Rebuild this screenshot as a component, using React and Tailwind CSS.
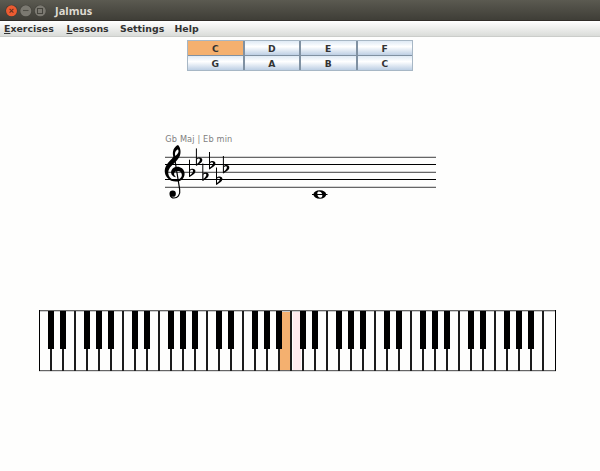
import React from "react";

const BUTTONS = ["C", "D", "E", "F", "G", "A", "B", "C"];
const MENU = [
  { label: "Exercises", mnemonic: true, style: "w-[62.5px]" },
  { label: "Lessons", mnemonic: true, style: "w-[53.5px]" },
  { label: "Settings", mnemonic: false, style: "w-[54.5px]" },
  { label: "Help", mnemonic: false, style: "w-[40px]" },
];
const WHITE_KEYS = Array.from({ length: 43 }, (_, i) => i);
const FLATS = [
  [189.5, 171.7],
  [196.4, 160.4],
  [202.8, 175.5],
  [209.5, 164],
  [216.5, 179.5],
  [223.4, 168],
];

function TitleBar() {
  return (
    <header className="flex h-[21px] items-center border-b border-[#302c28] bg-linear-to-b from-[#5b5a51] to-[#3f3e37] pl-[5px]">
      <svg width="44" height="20" viewBox="0 0 44 20" className="block">
        <circle cx="6.5" cy="10.8" r="6.1" fill="#3f3c34" />
        <circle cx="6.5" cy="10.8" r="5.5" fill="#ec5b31" />
        <path d="M4.6 8.9l3.8 3.8M8.4 8.9l-3.8 3.8" stroke="#66321f" strokeWidth="1.1" />
        <circle cx="20.8" cy="10.8" r="6.1" fill="#45443d" />
        <circle cx="20.8" cy="10.8" r="5.5" fill="#7b7971" />
        <path d="M18 10.5h5.5" stroke="#504f48" strokeWidth="1.1" />
        <circle cx="35.3" cy="10.8" r="6.1" fill="#45443d" />
        <circle cx="35.3" cy="10.8" r="5.5" fill="#7b7971" />
        <rect x="32.5" y="8.5" width="5" height="5" fill="none" stroke="#45443d" />
      </svg>
      <h1 className="ml-[6px] mt-[2px] font-['Open_Sans',sans-serif] text-[11px] font-bold leading-[14px] text-[#dfdbd2]">
        Jalmus
      </h1>
    </header>
  );
}

function MenuBar() {
  return (
    <nav className="flex h-4 border-b border-[#cbcdca] bg-linear-to-b from-white to-[#dadcd9] pl-1 text-[9.4px] font-bold leading-[15px] text-[#333]">
      {MENU.map((m) => (
        <span key={m.label} className={`${m.style} shrink-0 whitespace-nowrap`}>
          {m.mnemonic ? <span className="underline">{m.label[0]}</span> : m.label[0]}
          {m.label.slice(1)}
        </span>
      ))}
    </nav>
  );
}

function NoteButtons() {
  return (
    <div className="ml-[187px] mt-[3px] grid h-[31px] w-[226px] grid-cols-4 grid-rows-2 gap-x-[2px] gap-y-px border border-[#a7b7c5] bg-[#8091a2]">
      {BUTTONS.map((b, i) => (
        <button
          key={i}
          className={`flex items-center justify-center pt-px text-[9.2px] font-bold leading-none text-[#333] ${
            i === 0 ? "bg-[#f4b06f]" : "bg-linear-to-b from-[#dfeaf5] via-white via-40% to-[#bdcfe4]"
          }`}
        >
          {b}
        </button>
      ))}
    </div>
  );
}

function Staff() {
  return (
    <svg width="290" height="76" viewBox="160 130 290 76" className="ml-[160px] mt-[59px] block">
      <text x="165.3" y="142" fontSize="8.2" fill="#808080" fontFamily="DejaVu Sans" textLength="67">
        Gb Maj | Eb min
      </text>
      <g shapeRendering="crispEdges">
        {[156, 171, 186].map((y) => (
          <g key={y}>
            <rect x="165" y={y} width="271" height="1" fill="#d4d4d4" />
            <rect x="165" y={y + 1} width="271" height="1" fill="#666" />
          </g>
        ))}
        <rect x="165" y="164" width="271" height="1" fill="#000" />
        <rect x="165" y="179" width="271" height="1" fill="#000" />
      </g>
      <g transform="translate(155 128) scale(.33333)">
        <path
          fillRule="evenodd"
          d="M69 51C77 59 79 73 74 85C69 96 60 103 52 111C41 121 37 132 41 142C45 153 56 157 66 155C77 153 82 146 80 138C78 130 71 128 64 130C55 133 55 142 64 148C51 146 45 136 50 126C56 115 71 113 81 121C92 130 91 147 81 155C68 164 48 162 37 149C27 137 27 123 35 110C41 100 50 94 55 86C51 70 56 57 69 51ZM69 64C61 68 58 76 61 84C70 77 73 71 69 64Z"
        />
        <path d="M58 85L74 184C77 202 67 210 57 210C51 210 47 206 46 202" fill="none" stroke="#000" strokeWidth="3.6" />
        <circle cx="53" cy="197" r="9.5" />
      </g>
      {FLATS.map(([x, y]) => (
        <g key={x} transform={`translate(${x} ${y})`}>
          <path d="M0-12V5.2" stroke="#000" strokeWidth="1" />
          <path
            fillRule="evenodd"
            d="M0-1.6C2-3.8 6.3-3.2 5.9-.2C5.6 2.3 2.7 3.6 0 5.4ZM.4-.8V3.6C2.3 2.2 3.7.6 3.5-.9C3.3-2.4 1.4-1.9.4-.8Z"
          />
        </g>
      ))}
      <path d="M312 194.5h15.5" stroke="#000" />
      <path
        fillRule="evenodd"
        d="M313.4 194.5a6.4 4.2 0 1 0 12.8 0a6.4 4.2 0 1 0-12.8 0ZM317.3 193.4C317.3 190.6 321 190.8 322 193.8C323 196.8 321.8 198 320 197.8C318.2 197.5 317.3 195.4 317.3 193.4Z"
      />
      <path d="M317 194.5h5" stroke="#000" />
    </svg>
  );
}

function Keyboard() {
  return (
    <svg width="518" height="63" viewBox="39 310 518 63" className="ml-[39px] mt-[104px] block" shapeRendering="crispEdges">
      <rect x="280" y="311" width="10" height="60" fill="#f4b06f" />
      <rect x="293" y="311" width="8" height="59" fill="#ffebee" />
      <rect x="39" y="310" width="517" height="1" fill="#666" />
      <rect x="39" y="311" width="517" height="1" fill="#ccc" />
      <rect x="39" y="370" width="517" height="1" fill="#666" />
      <rect x="39" y="371" width="517" height="1" fill="#ddd" />
      <rect x="39" y="310" width="1" height="61" />
      <rect x="555" y="310" width="1" height="61" />
      {WHITE_KEYS.slice(1).map((i) => (
        <g key={i}>
          <rect x={38 + i * 12} y="311" width="2" height="60" fill="#1c1c1c" />
          {![3, 0].includes(i % 7) && <rect x={36 + i * 12} y="311" width="6" height="38" />}
        </g>
      ))}
    </svg>
  );
}

export default function App() {
  return (
    <main className="h-[471px] w-[600px] overflow-hidden bg-[#fefefd] font-['DejaVu_Sans',sans-serif]">
      <TitleBar />
      <MenuBar />
      <NoteButtons />
      <Staff />
      <Keyboard />
    </main>
  );
}
